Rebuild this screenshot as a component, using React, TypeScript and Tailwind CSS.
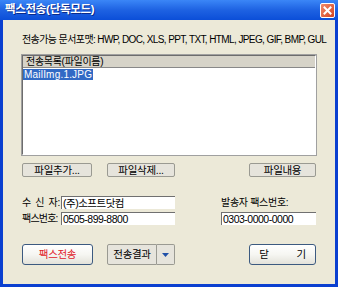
const font = "font-['Liberation_Sans','Noto_Sans_CJK_KR',sans-serif]"

function XpButton({ children, className = '' }: { children: React.ReactNode; className?: string }) {
  return (
    <button
      className={`flex items-center justify-center whitespace-nowrap rounded-[3px] border border-[#3c5a80] bg-gradient-to-b from-white via-[#f6f6f2] to-[#e3e2da] text-[10.5px] leading-none tracking-[-0.3px] ${className}`}
    >
      {children}
    </button>
  )
}

function FlatButton({ children, className = '' }: { children: React.ReactNode; className?: string }) {
  return (
    <button
      className={`flex items-center justify-center whitespace-nowrap rounded-[2px] border border-[#9a9a92] bg-[#e6e4dc] text-[10.5px] leading-none tracking-[-0.3px] text-black ${className}`}
    >
      {children}
    </button>
  )
}

function Field({ value, className = '' }: { value: string; className?: string }) {
  return (
    <div
      className={`flex h-[13px] items-center whitespace-nowrap border-l border-t border-[#707070] bg-white pl-[1px] text-[10.5px] leading-none tracking-[-0.5px] ${className}`}
    >
      {value}
    </div>
  )
}

export default function App() {
  return (
    <div className={`flex h-[287px] w-[338px] flex-col bg-[#0a3fd0] ${font}`}>
      {/* title bar */}
      <div className="flex h-[20px] items-center justify-between bg-gradient-to-b from-[#3b86f7] via-[#1e62e2] to-[#0b4ed8] pl-[5px] pr-[3px]">
        <span className="whitespace-nowrap text-[11.5px] font-bold leading-none tracking-[-0.3px] text-white [text-shadow:1px_1px_0_#0a2a8a]">
          팩스전송(단독모드)
        </span>
        <div className="flex h-[15px] w-[15px] items-center justify-center rounded-[2px] border border-white bg-gradient-to-br from-[#f08a6a] to-[#d4421c]">
          <svg width="9" height="9" viewBox="0 0 9 9">
            <path d="M1.5 1.5L7.5 7.5M7.5 1.5L1.5 7.5" stroke="white" strokeWidth="2" strokeLinecap="square" />
          </svg>
        </div>
      </div>

      {/* body */}
      <div className="mx-[3px] mb-[3px] flex flex-1 flex-col bg-[#ece9d8] pl-[19px] pr-[19px] pt-[14px] text-black">
        <div className="h-[12px] whitespace-nowrap text-[10px] leading-[12px] tracking-[-0.6px]">
          전송가능 문서포맷: HWP, DOC, XLS, PPT, TXT, HTML, JPEG, GIF, BMP, GUL
        </div>

        {/* list */}
        <div className="mt-[9px] flex h-[100px] w-[294px] flex-col border border-b-white border-l-[#6d6d6d] border-r-white border-t-[#6d6d6d] bg-white outline outline-1 outline-[#a0a0a0]">
          <div className="flex h-[12px] items-center whitespace-nowrap border-b border-[#888] bg-[#d6d3c8] pl-[3px] text-[10px] leading-none tracking-[-0.3px]">
            전송목록(파일이름)
          </div>
          <div className="mt-[1px] flex">
            <span className="whitespace-nowrap bg-[#316ac5] px-[1px] text-[10px] leading-[11px] tracking-[0.2px] text-white">
              MailImg.1.JPG
            </span>
          </div>
        </div>

        {/* file buttons */}
        <div className="mt-[8px] flex h-[14px] w-[294px]">
          <FlatButton className="w-[70px]">파일추가...</FlatButton>
          <FlatButton className="ml-[15px] w-[68px]">파일삭제...</FlatButton>
          <FlatButton className="ml-auto w-[67px]">파일내용</FlatButton>
        </div>

        {/* fields */}
        <div className="mt-[19px] flex w-[294px]">
          <div className="flex flex-col gap-[3px]">
            <div className="flex items-center">
              <span className="flex w-[39px] whitespace-nowrap text-[10px] leading-none">
                <span>수</span>
                <span className="ml-[4px]">신</span>
                <span className="ml-[4px]">자:</span>
              </span>
              <Field className="w-[114px]" value="(주)소프트닷컴" />
            </div>
            <div className="flex items-center">
              <span className="w-[39px] whitespace-nowrap text-[10px] leading-none tracking-[-0.8px]">팩스번호:</span>
              <Field className="w-[114px]" value="0505-899-8800" />
            </div>
          </div>
          <div className="ml-auto flex flex-col gap-[3px]">
            <div className="flex h-[13px] items-center whitespace-nowrap text-[10px] leading-none tracking-[-0.3px]">
              발송자 팩스번호:
            </div>
            <Field className="w-[95px]" value="0303-0000-0000" />
          </div>
        </div>

        {/* bottom buttons */}
        <div className="mt-[19px] flex h-[21px] w-[294px]">
          <XpButton className="w-[71px] text-[#e0202a]">팩스전송</XpButton>
          <FlatButton className="ml-[14px] w-[50px] rounded-r-none">전송결과</FlatButton>
          <FlatButton className="w-[18px] rounded-l-none border-l-0">
            <svg width="7" height="4" viewBox="0 0 7 4">
              <path d="M0 0H7L3.5 4Z" fill="#2050a8" />
            </svg>
          </FlatButton>
          <XpButton className="ml-auto w-[67px]">
            <span>닫</span>
            <span className="ml-[28px]">기</span>
          </XpButton>
        </div>
      </div>
    </div>
  )
}
